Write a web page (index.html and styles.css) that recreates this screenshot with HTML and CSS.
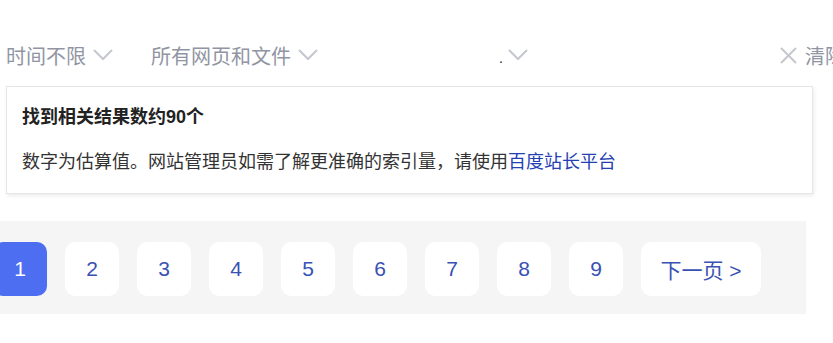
FILE: index.html
```html
<!DOCTYPE html>
<html lang="zh-CN">

<head>
    <meta charset="UTF-8">
    <meta name="viewport" content="width=device-width, initial-scale=1.0">
    <title>搜索工具</title>
    <link rel="stylesheet" href="styles.css">
</head>

<body>
    <div class="tools">
        <div class="tool tool-time">
            <span class="tool-label">时间不限</span>
            <svg class="chevron" width="20" height="12" viewBox="0 0 20 12"><polyline points="1,1 10,10 19,1" /></svg>
        </div>
        <div class="tool tool-type">
            <span class="tool-label">所有网页和文件</span>
            <svg class="chevron" width="20" height="12" viewBox="0 0 20 12"><polyline points="1,1 10,10 19,1" /></svg>
        </div>
        <div class="tool tool-site">
            <span class="tool-dot">.</span>
            <svg class="chevron" width="20" height="12" viewBox="0 0 20 12"><polyline points="1,1 10,10 19,1" /></svg>
        </div>
        <div class="tool tool-clear">
            <svg class="close" width="17" height="17" viewBox="0 0 17 17"><line x1="1" y1="1" x2="16" y2="16" /><line x1="16" y1="1" x2="1" y2="16" /></svg>
            <span class="tool-label">清除</span>
        </div>
    </div>

    <div class="result-tip">
        <p class="tip-title">找到相关结果数约90个</p>
        <p class="tip-text">数字为估算值。网站管理员如需了解更准确的索引量，请使用<a href="#">百度站长平台</a></p>
    </div>

    <div class="pager">
        <div class="pages">
            <span class="page current">1</span>
            <a href="#" class="page">2</a>
            <a href="#" class="page">3</a>
            <a href="#" class="page">4</a>
            <a href="#" class="page">5</a>
            <a href="#" class="page">6</a>
            <a href="#" class="page">7</a>
            <a href="#" class="page">8</a>
            <a href="#" class="page">9</a>
            <a href="#" class="page next">下一页 &gt;</a>
        </div>
    </div>
</body>

</html>
```

FILE: styles.css
```css
body {
    margin: 0;
    font-family: "Liberation Sans", "Noto Sans CJK SC", sans-serif;
    background: #fff;
    color: #333;
    overflow: hidden;
}

.tools {
    display: flex;
    align-items: center;
    width: 900px;
    height: 30px;
    margin-top: 40px;
    padding-left: 6px;
    white-space: nowrap;
}

.tool {
    display: flex;
    align-items: center;
    gap: 7px;
    font-size: 20px;
    color: #9195a3;
}

.tool-type {
    margin-left: 38px;
}

.tool-site {
    margin-left: 181px;
    gap: 5px;
}

.tool-clear {
    margin-left: 252px;
    gap: 8px;
}

.tool-dot {
    color: #222;
    font-size: 14px;
    margin-top: 6px;
}

.chevron polyline {
    fill: none;
    stroke: #c4c7ce;
    stroke-width: 2;
}

.close line {
    stroke: #c4c7ce;
    stroke-width: 2;
}

.result-tip {
    width: 790px;
    margin: 16px 0 0 6px;
    padding: 17px 0 18px 15px;
    border: 1px solid #e6e6e6;
    box-shadow: 1px 2px 4px rgba(0, 0, 0, 0.08);
    background: #fff;
}

.result-tip p {
    margin: 0;
    font-size: 18px;
    line-height: 26px;
}

.tip-title {
    font-weight: bold;
    color: #222;
    font-size: 17px;
}

.result-tip .tip-text {
    margin-top: 19px;
    color: #333;
}

.tip-text a {
    color: #2440b3;
    text-decoration: none;
}

.pager {
    width: 806px;
    margin-top: 27px;
    padding: 21px 0 18px;
    background: #f5f5f6;
}

.pages {
    display: flex;
    gap: 18px;
    margin-left: -7px;
}

.page {
    display: flex;
    align-items: center;
    justify-content: center;
    width: 54px;
    height: 54px;
    border-radius: 10px;
    background: #fff;
    color: #3951b3;
    font-size: 21px;
    text-decoration: none;
}

.page.current {
    background: #4e6ef2;
    color: #fff;
}

.page.next {
    width: 120px;
}
```
